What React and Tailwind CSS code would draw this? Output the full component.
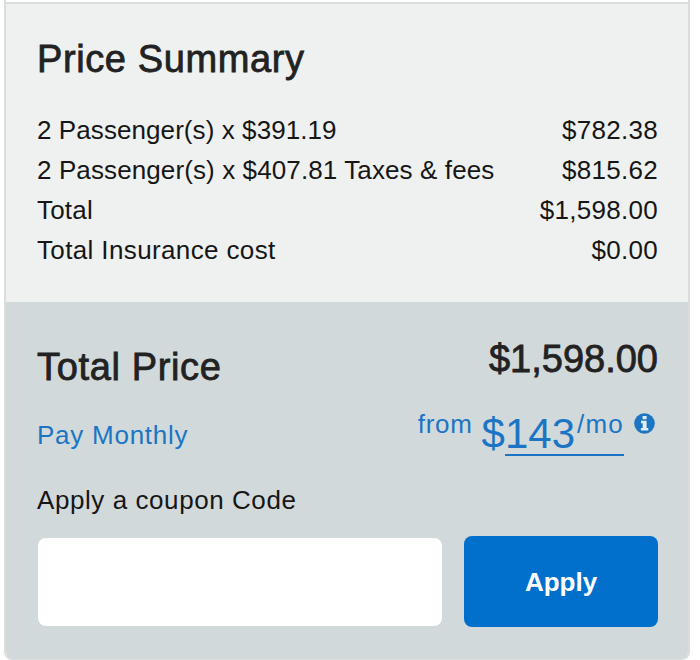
const rows = [
  { label: '2 Passenger(s) x $391.19', value: '$782.38', labelSpacing: 'tracking-[0.08px]' },
  { label: '2 Passenger(s) x $407.81 Taxes & fees', value: '$815.62', labelSpacing: 'tracking-[0.11px]' },
  { label: 'Total', value: '$1,598.00', labelSpacing: 'tracking-[0.2px]' },
  { label: 'Total Insurance cost', value: '$0.00', labelSpacing: 'tracking-[0.37px]' },
];

function InfoIcon() {
  return (
    <svg viewBox="0 0 21 21" className="mt-[13px] ml-[10px] h-[21px] w-[21px] shrink-0">
      <circle cx="10.5" cy="10.5" r="10.3" fill="#1c75c4" />
      <path d="M8.6 3h4v3.2h-4zM7 7.7h5.6V15h1.7v2.6H6.9V15h1.8v-4.7H7z" fill="#e6edf0" />
    </svg>
  );
}

export default function App() {
  return (
    <div className="h-[660px] w-[700px] overflow-hidden bg-white pl-1 font-['Liberation_Sans',Arial,sans-serif] text-[26px] leading-10 text-[#161616]">
      <div className="flex h-[660px] w-[686px] flex-col overflow-hidden rounded-b-lg border-x-2 border-b border-[#d9dddd]">
        <div className="h-0.5 shrink-0" />
        <section className="h-[300px] shrink-0 border-t-2 border-[#d9dddd] bg-[#eff1f1] pt-[35px] pr-[30px] pl-[31px]">
          <h2 className="text-[38px] leading-10 tracking-[0.6px] whitespace-nowrap text-[#222] [-webkit-text-stroke:0.8px_#222]">
            Price Summary
          </h2>
          <div className="mt-[31px]">
            {rows.map((row) => (
              <div key={row.label} className="flex justify-between whitespace-nowrap">
                <span className={row.labelSpacing}>{row.label}</span>
                <span className="tracking-[0.3px]">{row.value}</span>
              </div>
            ))}
          </div>
        </section>
        <section className="flex-1 bg-[#d2d9db] pt-[37px] pr-[30px] pl-[31px]">
          <div className="flex h-[76px] justify-between text-[38px] whitespace-nowrap text-[#222] [-webkit-text-stroke:0.8px_#222]">
            <span className="pt-2 tracking-[0.65px]">Total Price</span>
            <span>$1,598.00</span>
          </div>
          <div className="flex h-[65px] justify-between whitespace-nowrap text-[#1c75c4]">
            <span className="tracking-[0.75px]">Pay Monthly</span>
            <div className="-mt-[15px] flex pr-[3px]">
              <span className="mt-1 mr-[9px] tracking-[0.7px]">from</span>
              <span className="mt-[14px] text-[42px] leading-10">$</span>
              <span className="flex h-[56px] border-b-2 border-[#1c75c4]">
                <span className="mt-[14px] text-[42px] leading-10">143</span>
                <span className="mt-1 ml-0.5 tracking-[1.2px]">/mo</span>
              </span>
              <InfoIcon />
            </div>
          </div>
          <label htmlFor="coupon" className="block tracking-[0.57px]">
            Apply a coupon Code
          </label>
          <div className="mt-4 flex items-center justify-between">
            <input id="coupon" className="ml-px h-[88px] w-[404px] rounded-lg bg-white outline-none" />
            <button className="h-[91px] w-[194px] rounded-lg bg-[#0070cc] font-bold text-white">Apply</button>
          </div>
        </section>
      </div>
    </div>
  );
}
